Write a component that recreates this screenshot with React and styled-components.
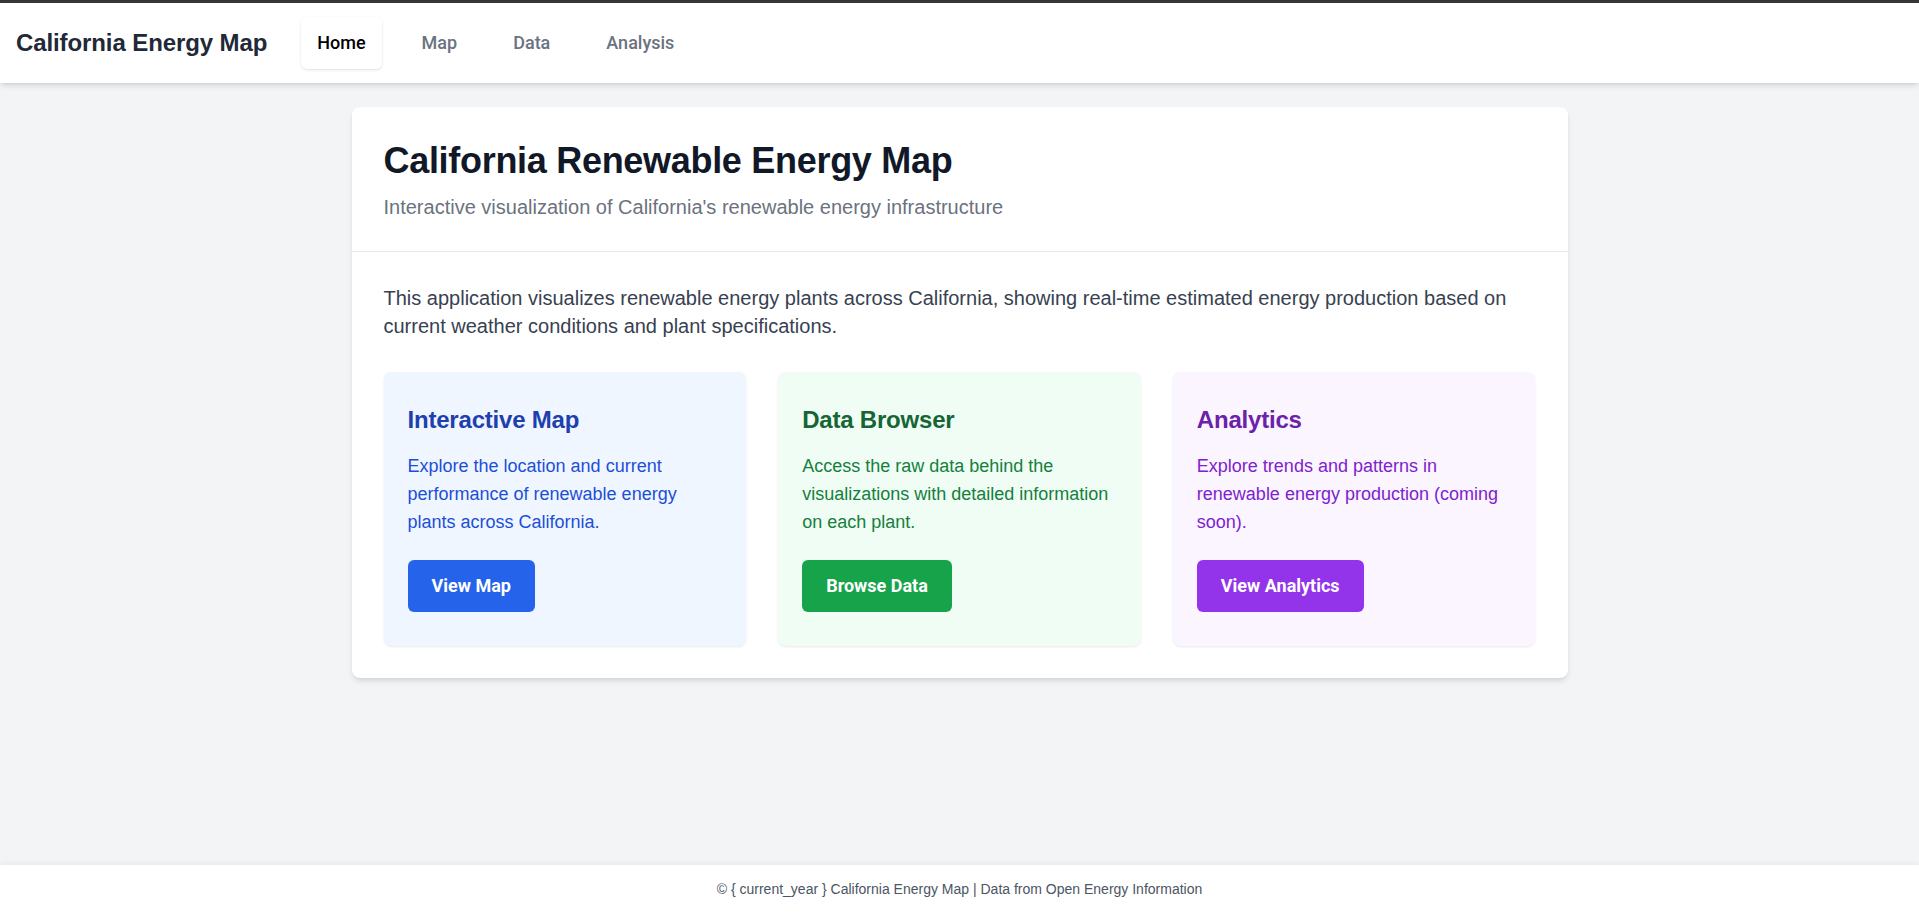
import React from "react";
import styled, { createGlobalStyle } from "styled-components";

const GlobalStyle = createGlobalStyle`
  * { box-sizing: border-box; }
  html, body { margin: 0; padding: 0; }
  body {
    font-family: "Liberation Sans", Arial, sans-serif;
    background: #f3f4f6;
    color: #111827;
    -webkit-font-smoothing: antialiased;
  }
  h1, h2, h3, p { margin: 0; }
`;

const Page = styled.div`
  min-height: 100vh;
  display: flex;
  flex-direction: column;
`;

const NavBar = styled.nav`
  background: #ffffff;
  border-top: 3px solid #363636;
  box-shadow: 0 4px 6px -1px rgba(0, 0, 0, 0.1), 0 2px 4px -2px rgba(0, 0, 0, 0.1);
  height: 83px;
  display: flex;
  align-items: center;
  padding: 0 16px;
  position: relative;
  z-index: 1;
`;

const Brand = styled.a`
  font-size: 24px;
  line-height: 32px;
  font-weight: 700;
  color: #1f2937;
  text-decoration: none;
  letter-spacing: -0.1px;
`;

const NavLinks = styled.div`
  display: flex;
  align-items: center;
  gap: 24px;
  margin-left: 34px;
`;

const NavLink = styled.a`
  font-family: Roboto, "Liberation Sans", sans-serif;
  font-size: 18px;
  line-height: 28px;
  font-weight: 500;
  padding: 12px 16px;
  border-radius: 6px;
  text-decoration: none;
  color: ${(p) => (p.$active ? "#000000" : "#6b7280")};
  background: #ffffff;
  box-shadow: ${(p) =>
    p.$active ? "0 1px 3px 0 rgba(0,0,0,0.1), 0 1px 2px -1px rgba(0,0,0,0.1)" : "none"};
`;

const Main = styled.main`
  flex: 1;
  width: 100%;
  max-width: 1280px;
  margin: 0 auto;
  padding: 24px 32px;
`;

const Panel = styled.section`
  background: #ffffff;
  border-radius: 8px;
  box-shadow: 0 4px 6px -1px rgba(0, 0, 0, 0.1), 0 2px 4px -2px rgba(0, 0, 0, 0.1);
`;

const PanelHeader = styled.header`
  padding: 34px 32px 30px;
  border-bottom: 1px solid #e5e7eb;
  display: flex;
  flex-direction: column;
  gap: 12px;
`;

const Title = styled.h1`
  font-size: 36px;
  line-height: 40px;
  font-weight: 700;
  color: #111827;
  letter-spacing: -0.3px;
`;

const Subtitle = styled.p`
  font-size: 20px;
  line-height: 28px;
  color: #6b7280;
`;

const PanelBody = styled.div`
  padding: 32px;
`;

const Intro = styled.p`
  font-size: 20px;
  line-height: 28px;
  color: #374151;
  margin-bottom: 32px;
`;

const CardGrid = styled.div`
  display: grid;
  grid-template-columns: repeat(3, 1fr);
  gap: 32px;
`;

const themes = {
  blue: { bg: "#eff6ff", title: "#1e40af", text: "#1d4ed8", btn: "#2563eb" },
  green: { bg: "#f0fdf4", title: "#166534", text: "#15803d", btn: "#16a34a" },
  purple: { bg: "#faf5ff", title: "#6b21a8", text: "#7e22ce", btn: "#9333ea" },
};

const Card = styled.div`
  background: ${(p) => themes[p.$tone].bg};
  border-radius: 8px;
  padding: 32px 24px 34px;
  box-shadow: 0 1px 3px 0 rgba(0, 0, 0, 0.08), 0 1px 2px -1px rgba(0, 0, 0, 0.06);
  display: flex;
  flex-direction: column;
  align-items: flex-start;
`;

const CardTitle = styled.h2`
  font-size: 24px;
  line-height: 32px;
  font-weight: 700;
  color: ${(p) => themes[p.$tone].title};
  margin-bottom: 16px;
  letter-spacing: -0.2px;
`;

const CardText = styled.p`
  font-size: 18px;
  line-height: 28px;
  color: ${(p) => themes[p.$tone].text};
  margin-bottom: 24px;
  min-height: 84px;
`;

const CardButton = styled.a`
  display: inline-block;
  font-family: Roboto, "Liberation Sans", sans-serif;
  font-size: 18px;
  line-height: 28px;
  font-weight: 700;
  color: #ffffff;
  background: ${(p) => themes[p.$tone].btn};
  padding: 12px 24px;
  border-radius: 6px;
  text-decoration: none;
`;

const Footer = styled.footer`
  background: #ffffff;
  padding: 14px 16px;
  text-align: center;
  font-size: 14px;
  line-height: 20px;
  color: #4b5563;
  box-shadow: 0 -1px 6px rgba(0, 0, 0, 0.06);
`;

const cards = [
  {
    tone: "blue",
    title: "Interactive Map",
    text: "Explore the location and current performance of renewable energy plants across California.",
    button: "View Map",
  },
  {
    tone: "green",
    title: "Data Browser",
    text: "Access the raw data behind the visualizations with detailed information on each plant.",
    button: "Browse Data",
  },
  {
    tone: "purple",
    title: "Analytics",
    text: "Explore trends and patterns in renewable energy production (coming soon).",
    button: "View Analytics",
  },
];

export default function App() {
  return (
    <Page>
      <GlobalStyle />
      <NavBar>
        <Brand href="#">California Energy Map</Brand>
        <NavLinks>
          <NavLink href="#" $active>Home</NavLink>
          <NavLink href="#">Map</NavLink>
          <NavLink href="#">Data</NavLink>
          <NavLink href="#">Analysis</NavLink>
        </NavLinks>
      </NavBar>
      <Main>
        <Panel>
          <PanelHeader>
            <Title>California Renewable Energy Map</Title>
            <Subtitle>Interactive visualization of California's renewable energy infrastructure</Subtitle>
          </PanelHeader>
          <PanelBody>
            <Intro>
              This application visualizes renewable energy plants across California, showing real-time
              estimated energy production based on current weather conditions and plant specifications.
            </Intro>
            <CardGrid>
              {cards.map((c) => (
                <Card key={c.title} $tone={c.tone}>
                  <CardTitle $tone={c.tone}>{c.title}</CardTitle>
                  <CardText $tone={c.tone}>{c.text}</CardText>
                  <CardButton href="#" $tone={c.tone}>{c.button}</CardButton>
                </Card>
              ))}
            </CardGrid>
          </PanelBody>
        </Panel>
      </Main>
      <Footer>© {"{ current_year }"} California Energy Map | Data from Open Energy Information</Footer>
    </Page>
  );
}
